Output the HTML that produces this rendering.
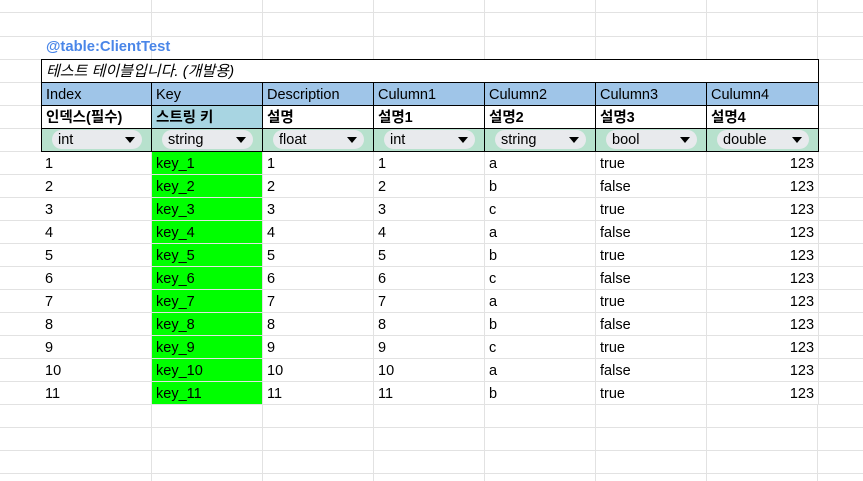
<!DOCTYPE html>
<html><head><meta charset="utf-8"><style>
body{margin:0;width:863px;height:481px;overflow:hidden;background:#fff;position:relative;font-family:"Liberation Sans","Noto Sans CJK KR",sans-serif;font-size:14.5px;color:#000}
.grid{position:absolute;left:0;top:0;width:863px;height:481px;
background-image:linear-gradient(to bottom,transparent 12px,#e2e2e2 12px,#e2e2e2 13px,transparent 13px),
repeating-linear-gradient(to bottom,transparent 0,transparent 22px,#e2e2e2 22px,#e2e2e2 23px),
repeating-linear-gradient(to right,transparent 0,transparent 110px,#e2e2e2 110px,#e2e2e2 111px);
background-position:0 0,0 14px,41px 0;background-repeat:no-repeat,repeat-y,repeat-x;background-size:863px 13px,863px 481px,863px 481px}
table{position:absolute;left:41px;top:59px;border-collapse:separate;border-spacing:0;table-layout:fixed;width:778px}
td{height:23px;box-sizing:border-box;padding:2px 4px 0;border-right:1px solid #e2e2e2;border-bottom:1px solid #e2e2e2;white-space:nowrap;overflow:hidden;line-height:20px;background:#fff;vertical-align:top}
tr.b td{border-right:1px solid #000;border-bottom:1px solid #000}
tr.b td:first-child{border-left:1px solid #000}
tr.t td{border-top:1px solid #000}
tr.h td{background:#9fc5e8}
tr.k td{font-weight:bold}
tr.ty td{background:#b7e1cd;padding:1px 9px 0 10px}
.chip{display:flex;justify-content:space-between;align-items:center;height:19px;border-radius:10px;background:#e8eaed;padding:0 7px 0 6px;line-height:19px}
.chip span{position:relative;top:1px}
.chip svg{display:block}
td.g{background:#00ff00}
td.r{text-align:right}
.title{position:absolute;left:46px;top:39px;color:#4a86e8;font-weight:bold;font-size:14.8px}
</style></head><body>
<div class="grid"></div>
<div class="title">@table:ClientTest</div>
<table>
<colgroup><col style="width:111px"><col style="width:111px"><col style="width:111px"><col style="width:111px"><col style="width:111px"><col style="width:111px"><col style="width:112px"></colgroup>
<tr class="b t"><td colspan="7" style="font-style:italic;font-size:15px">테스트 테이블입니다. (개발용)</td></tr>
<tr class="b h"><td>Index</td><td>Key</td><td>Description</td><td>Culumn1</td><td>Culumn2</td><td>Culumn3</td><td>Culumn4</td></tr>
<tr class="b k"><td>인덱스(필수)</td><td style="background:#a8d5e2">스트링 키</td><td>설명</td><td>설명1</td><td>설명2</td><td>설명3</td><td>설명4</td></tr>
<tr class="b ty"><td><div class="chip"><span>int</span><svg width="10" height="6"><path d="M0 0H10L5 6Z"/></svg></div></td><td><div class="chip"><span>string</span><svg width="10" height="6"><path d="M0 0H10L5 6Z"/></svg></div></td><td><div class="chip"><span>float</span><svg width="10" height="6"><path d="M0 0H10L5 6Z"/></svg></div></td><td><div class="chip"><span>int</span><svg width="10" height="6"><path d="M0 0H10L5 6Z"/></svg></div></td><td><div class="chip"><span>string</span><svg width="10" height="6"><path d="M0 0H10L5 6Z"/></svg></div></td><td><div class="chip"><span>bool</span><svg width="10" height="6"><path d="M0 0H10L5 6Z"/></svg></div></td><td><div class="chip"><span>double</span><svg width="10" height="6"><path d="M0 0H10L5 6Z"/></svg></div></td></tr>
<tr><td>1</td><td class="g">key_1</td><td>1</td><td>1</td><td>a</td><td>true</td><td class="r">123</td></tr>
<tr><td>2</td><td class="g">key_2</td><td>2</td><td>2</td><td>b</td><td>false</td><td class="r">123</td></tr>
<tr><td>3</td><td class="g">key_3</td><td>3</td><td>3</td><td>c</td><td>true</td><td class="r">123</td></tr>
<tr><td>4</td><td class="g">key_4</td><td>4</td><td>4</td><td>a</td><td>false</td><td class="r">123</td></tr>
<tr><td>5</td><td class="g">key_5</td><td>5</td><td>5</td><td>b</td><td>true</td><td class="r">123</td></tr>
<tr><td>6</td><td class="g">key_6</td><td>6</td><td>6</td><td>c</td><td>false</td><td class="r">123</td></tr>
<tr><td>7</td><td class="g">key_7</td><td>7</td><td>7</td><td>a</td><td>true</td><td class="r">123</td></tr>
<tr><td>8</td><td class="g">key_8</td><td>8</td><td>8</td><td>b</td><td>false</td><td class="r">123</td></tr>
<tr><td>9</td><td class="g">key_9</td><td>9</td><td>9</td><td>c</td><td>true</td><td class="r">123</td></tr>
<tr><td>10</td><td class="g">key_10</td><td>10</td><td>10</td><td>a</td><td>false</td><td class="r">123</td></tr>
<tr><td>11</td><td class="g">key_11</td><td>11</td><td>11</td><td>b</td><td>true</td><td class="r">123</td></tr>
</table>
</body></html>
